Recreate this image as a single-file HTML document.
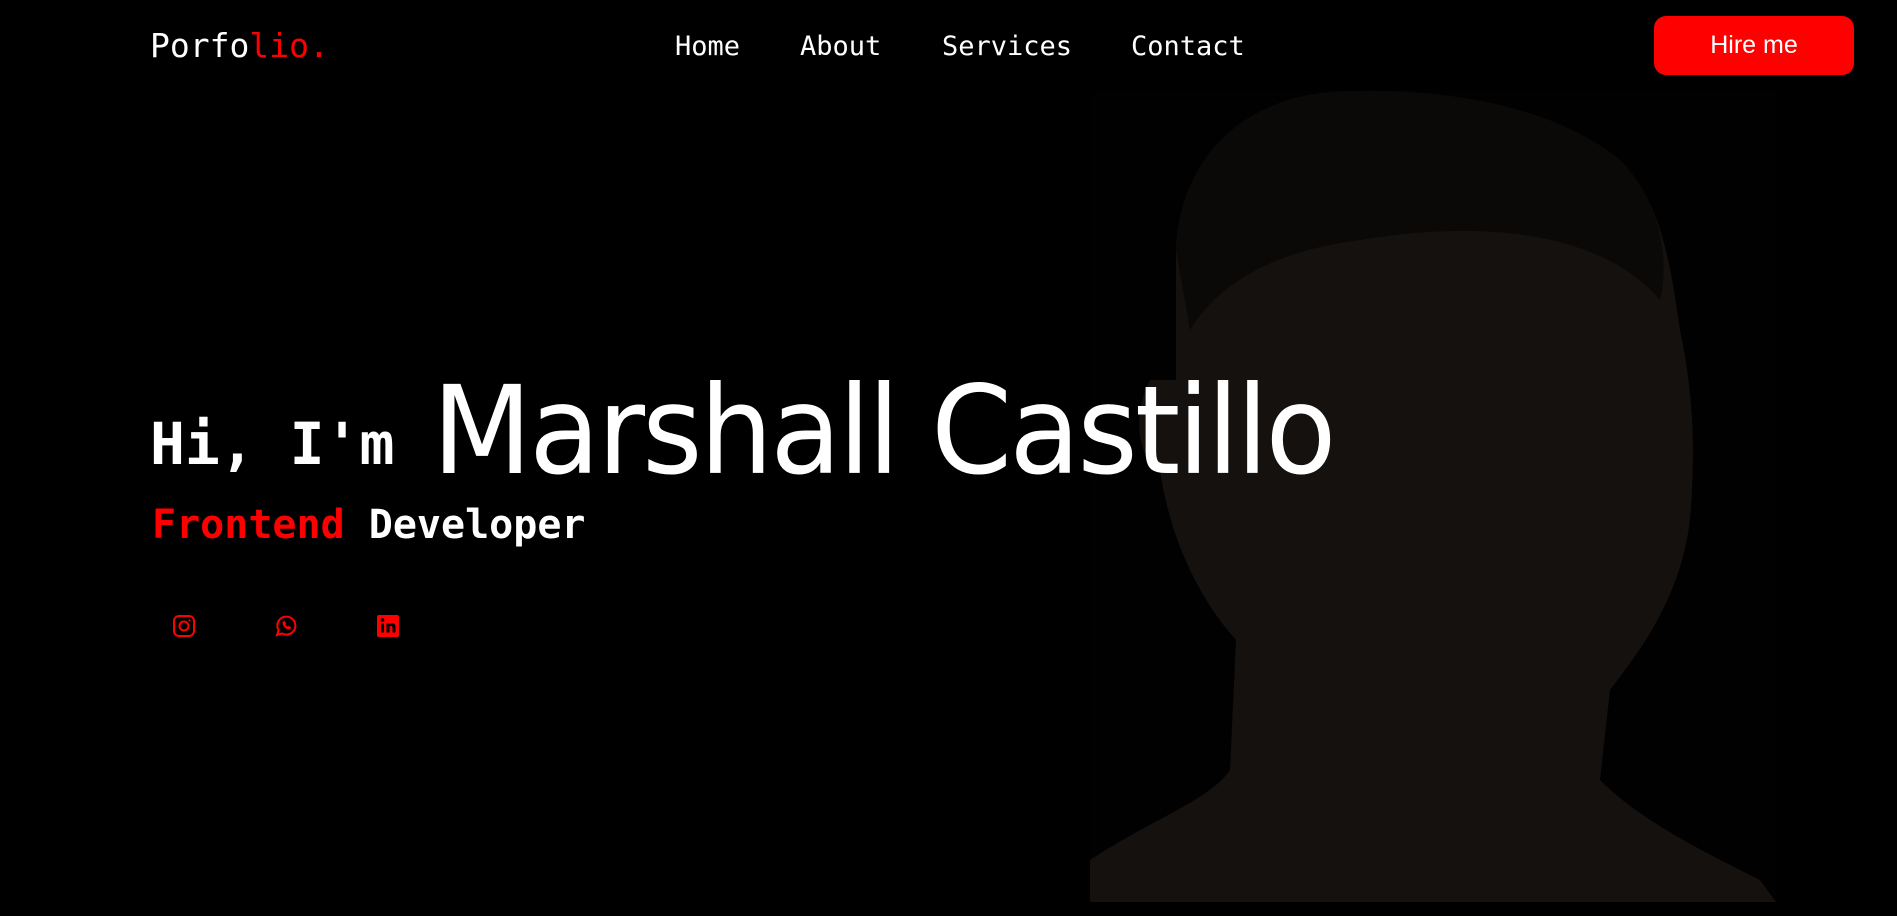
<!DOCTYPE html>
<html><head><meta charset="utf-8"><style>
html,body{margin:0;padding:0;background:#000;width:1897px;height:916px;overflow:hidden;position:relative}
.mono{font-family:"DejaVu Sans Mono","Liberation Mono",monospace}
.logo{position:absolute;left:150px;top:26px;font-size:33px;color:#fff}
.logo span{color:#f00}
.nav{position:absolute;top:31px;font-size:27px;color:#fff}
.btn{position:absolute;left:1654px;top:16px;width:200px;height:59px;background:#f00;border-radius:12px;color:#fff;font-family:"Liberation Sans",sans-serif;font-size:25px;line-height:59px;text-align:center}
.hi{position:absolute;left:150px;top:410px;font-size:58px;font-weight:bold;color:#fff}
.name{position:absolute;left:432px;top:360px;font-size:122px;color:#fff;font-family:"Comic Sans MS","DejaVu Sans",sans-serif;letter-spacing:-3px;white-space:nowrap;transform:scaleX(0.95);transform-origin:left top}
.role{position:absolute;left:152px;top:502px;font-size:40px;font-weight:bold;color:#fff}
.role span{color:#f00}
svg.ic{position:absolute;top:614px;width:24px;height:24px}
</style></head><body>
<svg style="position:absolute;left:0;top:0" width="1897" height="916">
<rect x="1090" y="90" width="686" height="812" fill="#020101"/>
<path d="M1090 902 L1090 860 C1150 820 1210 800 1230 770 L1236 640 C1200 600 1170 540 1160 470 C1140 460 1130 420 1150 380 L1176 380 L1176 250 C1180 160 1240 100 1330 92 C1450 85 1560 110 1620 160 C1660 200 1670 260 1680 330 C1695 400 1695 460 1690 520 C1680 600 1640 650 1610 690 L1600 780 C1640 820 1700 850 1760 880 L1776 902 Z" fill="#14110f"/>
<path d="M1176 250 C1180 160 1240 100 1330 92 C1450 85 1560 110 1620 160 C1660 200 1670 260 1660 300 C1600 230 1480 220 1360 240 C1280 250 1220 280 1190 330 Z" fill="#0a0908"/>
</svg>
<div class="logo mono">Porfo<span>lio.</span></div>
<div class="nav mono" style="left:675px">Home</div>
<div class="nav mono" style="left:800px">About</div>
<div class="nav mono" style="left:942px">Services</div>
<div class="nav mono" style="left:1131px">Contact</div>
<div class="btn">Hire me</div>
<div class="hi mono">Hi, I'm</div>
<div class="name">Marshall Castillo</div>
<div class="role mono"><span>Frontend</span> Developer</div>
<svg class="ic" style="left:172px" viewBox="0 0 24 24" fill="none" stroke="#f00" stroke-width="2"><rect x="2" y="2" width="20" height="20" rx="5"/><circle cx="12" cy="12" r="4.5"/><circle cx="17.5" cy="6.5" r="1" fill="#f00" stroke="none"/></svg>
<svg class="ic" style="left:274px" viewBox="0 0 24 24" fill="none" stroke="#f00" stroke-width="2"><path d="M3 21l1.6-4.8A9 9 0 1 1 8 19.5z"/><path d="M9 8.5c0 3 3 6.5 6.5 6.5l1-1.5-2-1-1 .8c-1-.5-2.3-1.8-2.8-2.8l.8-1-1-2z" fill="#f00" stroke-width="1"/></svg>
<svg class="ic" style="left:376px" viewBox="0 0 24 24"><rect x="1" y="1" width="22" height="22" rx="2" fill="#f00"/><rect x="5" y="9.5" width="3" height="9" fill="#000"/><circle cx="6.5" cy="6" r="1.8" fill="#000"/><path d="M10.5 9.5h2.8v1.3c.6-1 1.8-1.5 3-1.5 2.3 0 3.2 1.4 3.2 4v5.2h-3v-4.6c0-1.2-.3-2-1.4-2s-1.6.8-1.6 2v4.6h-3z" fill="#000"/></svg>
</body></html>
